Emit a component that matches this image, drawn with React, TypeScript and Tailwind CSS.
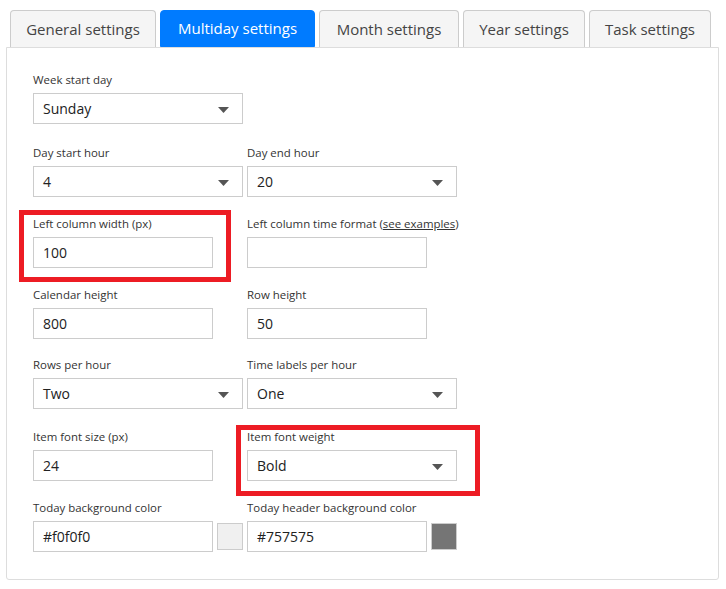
import React from "react";

const font = { fontFamily: '"Open Sans", "Noto Sans", sans-serif' };

function Arrow() {
  return (
    <svg width="11" height="6" viewBox="0 0 11 6" className="absolute right-[13px] top-[13px]">
      <path d="M0 0 L11 0 L5.5 6 Z" fill="#555" />
    </svg>
  );
}

function Label({ children }: { children: React.ReactNode }) {
  return <div className="h-[18px] leading-[18px] text-[11.45px] text-[#333] mb-[4px] whitespace-nowrap">{children}</div>;
}

function Select({ label, value }: { label: React.ReactNode; value: string }) {
  return (
    <div className="w-[210px]">
      <Label>{label}</Label>
      <div className="relative h-[31px] w-[210px] border border-[#ccc] bg-white pl-[9px] text-[14px] leading-[29px] text-[#222]">
        {value}
        <Arrow />
      </div>
    </div>
  );
}

function Input({ label, value }: { label: React.ReactNode; value: string }) {
  return (
    <div className="w-[210px]">
      <Label>{label}</Label>
      <div className="h-[31px] w-[180px] border border-[#ccc] bg-white pl-[9px] text-[14px] leading-[29px] text-[#222]">
        {value}
      </div>
    </div>
  );
}

function Color({ label, value, swatch }: { label: string; value: string; swatch: string }) {
  return (
    <div className="w-[210px]">
      <Label>{label}</Label>
      <div className="flex items-center gap-[4px]">
        <div className="h-[31px] w-[180px] border border-[#ccc] bg-white pl-[9px] text-[14px] leading-[29px] text-[#222]">
          {value}
        </div>
        <div className={`h-[27px] w-[26px] border border-[#ccc] ${swatch}`} />
      </div>
    </div>
  );
}

export default function App() {
  const tabs: [string, string][] = [
    ["General settings", "w-[146px]"],
    ["Multiday settings", "w-[155px]"],
    ["Month settings", "w-[140px]"],
    ["Year settings", "w-[122px]"],
    ["Task settings", "w-[122px]"],
  ];
  return (
    <div className="w-[726px] h-[589px] bg-white pt-[10px] pl-[6px]" style={font}>
      <div className="flex gap-[4px] pl-[4px]">
        {tabs.map(([t, w], i) => (
          <div
            key={t}
            className={
              i === 1
                ? `${w} shrink-0 whitespace-nowrap h-[37px] flex items-center justify-center rounded-t-[4px] border border-[#007bff] bg-[#007bff] text-white text-[15px]`
                : `${w} shrink-0 whitespace-nowrap h-[37px] flex items-center justify-center rounded-t-[4px] border border-[#ccc] border-b-0 bg-[#f5f5f5] text-[#444] text-[15px]`
            }
          >
            {t}
          </div>
        ))}
      </div>
      <div className="w-[713px] h-[533px] border border-[#ddd] rounded-b-[3px] pt-[23px] pl-[26px] flex flex-col">
        <div className="flex gap-[4px]">
          <Select label="Week start day" value="Sunday" />
        </div>
        <div className="flex gap-[4px] mt-[20px]">
          <Select label="Day start hour" value="4" />
          <Select label="Day end hour" value="20" />
        </div>
        <div className="flex gap-[4px] mt-[18px]">
          <div className="relative">
            <div className="absolute left-[-14px] top-[-5px] w-[212px] h-[72px] border-[5px] border-[#ed1c24]" />
            <Input label="Left column width (px)" value="100" />
          </div>
          <Input
            label={
              <span>
                Left column time format (<span className="underline">see examples</span>)
              </span>
            }
            value=""
          />
        </div>
        <div className="flex gap-[4px] mt-[18px]">
          <Input label="Calendar height" value="800" />
          <Input label="Row height" value="50" />
        </div>
        <div className="flex gap-[4px] mt-[17px]">
          <Select label="Rows per hour" value="Two" />
          <Select label="Time labels per hour" value="One" />
        </div>
        <div className="flex gap-[4px] mt-[19px]">
          <Input label="Item font size (px)" value="24" />
          <div className="relative">
            <div className="absolute left-[-11px] top-[-3px] w-[244px] h-[71px] border-[5px] border-[#ed1c24]" />
            <div className="relative">
              <Select label="Item font weight" value="Bold" />
            </div>
          </div>
        </div>
        <div className="flex gap-[4px] mt-[18px]">
          <Color label="Today background color" value="#f0f0f0" swatch="bg-[#f0f0f0]" />
          <Color label="Today header background color" value="#757575" swatch="bg-[#757575]" />
        </div>
      </div>
    </div>
  );
}
